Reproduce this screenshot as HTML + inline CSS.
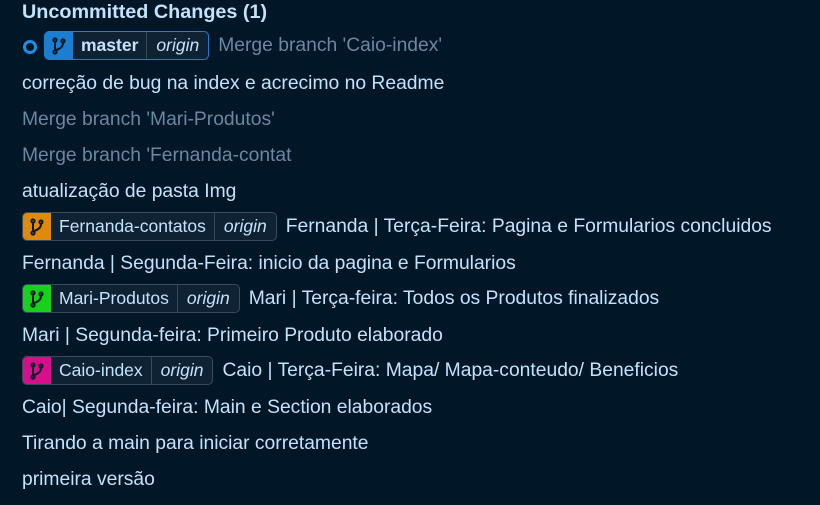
<!DOCTYPE html>
<html><head><meta charset="utf-8"><style>
body{margin:0;width:820px;height:505px;background:#011627;font-family:"Liberation Sans",sans-serif;color:#c3e2fc;font-size:19.3px;overflow:hidden;position:relative}
.r{position:absolute;left:22px;white-space:nowrap;line-height:22px;display:flex;align-items:center}
.g{color:#6a88a2}
.h{font-weight:bold;font-size:19.8px;top:1px}
.b{height:27px;border:1px solid #3b4a5a;border-radius:5px;display:flex;align-items:center;overflow:hidden;background:#0f2233;font-size:17.5px;margin-right:9px}
.b .i{width:28px;height:27px;display:flex;align-items:center;justify-content:center}
.b .n{padding:0 8px;border-right:1px solid #3b4a5a;height:27px;line-height:27px}
.b .o{padding:0 9px;font-style:italic;line-height:27px}
</style></head><body>
<div class="r h">Uncommitted Changes (1)</div>
<div style="position:absolute;left:23px;top:40px;width:8px;height:8px;border:3px solid #1b8ee6;border-radius:50%"></div>
<div class="r" style="left:44px;top:31px"><div class="b" style="border-color:#1b7ed0"><div class="i" style="background:#1b7ed0"><svg width="14" height="18" viewBox="0 0 14 18"><g fill="none" stroke="#0b1a28" stroke-width="2"><circle cx="3" cy="3" r="1.6"/><circle cx="11" cy="4" r="1.6"/><circle cx="3" cy="15" r="1.6"/><path d="M3 5V13M11 6Q11 11 4 13"/></g></svg></div><div class="n" style="font-weight:bold">master</div><div class="o">origin</div></div><span class="g">Merge branch 'Caio-index'</span></div>
<div class="r" style="top:73px">correção de bug na index e acrecimo no Readme</div>
<div class="r g" style="top:109px">Merge branch 'Mari-Produtos'</div>
<div class="r g" style="top:145px">Merge branch 'Fernanda-contat</div>
<div class="r" style="top:181px">atualização de pasta Img</div>
<div class="r" style="top:212px"><div class="b"><div class="i" style="background:#e08a0b"><svg width="14" height="18" viewBox="0 0 14 18"><g fill="none" stroke="#0b1a28" stroke-width="2"><circle cx="3" cy="3" r="1.6"/><circle cx="11" cy="4" r="1.6"/><circle cx="3" cy="15" r="1.6"/><path d="M3 5V13M11 6Q11 11 4 13"/></g></svg></div><div class="n">Fernanda-contatos</div><div class="o">origin</div></div><span>Fernanda | Terça-Feira: Pagina e Formularios concluidos</span></div>
<div class="r" style="top:253px">Fernanda | Segunda-Feira: inicio da pagina e Formularios</div>
<div class="r" style="top:284px"><div class="b"><div class="i" style="background:#16d21a"><svg width="14" height="18" viewBox="0 0 14 18"><g fill="none" stroke="#0b1a28" stroke-width="2"><circle cx="3" cy="3" r="1.6"/><circle cx="11" cy="4" r="1.6"/><circle cx="3" cy="15" r="1.6"/><path d="M3 5V13M11 6Q11 11 4 13"/></g></svg></div><div class="n">Mari-Produtos</div><div class="o">origin</div></div><span>Mari | Terça-feira: Todos os Produtos finalizados</span></div>
<div class="r" style="top:325px">Mari | Segunda-feira: Primeiro Produto elaborado</div>
<div class="r" style="top:356px"><div class="b"><div class="i" style="background:#d70f8c"><svg width="14" height="18" viewBox="0 0 14 18"><g fill="none" stroke="#0b1a28" stroke-width="2"><circle cx="3" cy="3" r="1.6"/><circle cx="11" cy="4" r="1.6"/><circle cx="3" cy="15" r="1.6"/><path d="M3 5V13M11 6Q11 11 4 13"/></g></svg></div><div class="n">Caio-index</div><div class="o">origin</div></div><span>Caio | Terça-Feira: Mapa/ Mapa-conteudo/ Beneficios</span></div>
<div class="r" style="top:397px">Caio| Segunda-feira: Main e Section elaborados</div>
<div class="r" style="top:433px">Tirando a main para iniciar corretamente</div>
<div class="r" style="top:469px">primeira versão</div>
</body></html>
